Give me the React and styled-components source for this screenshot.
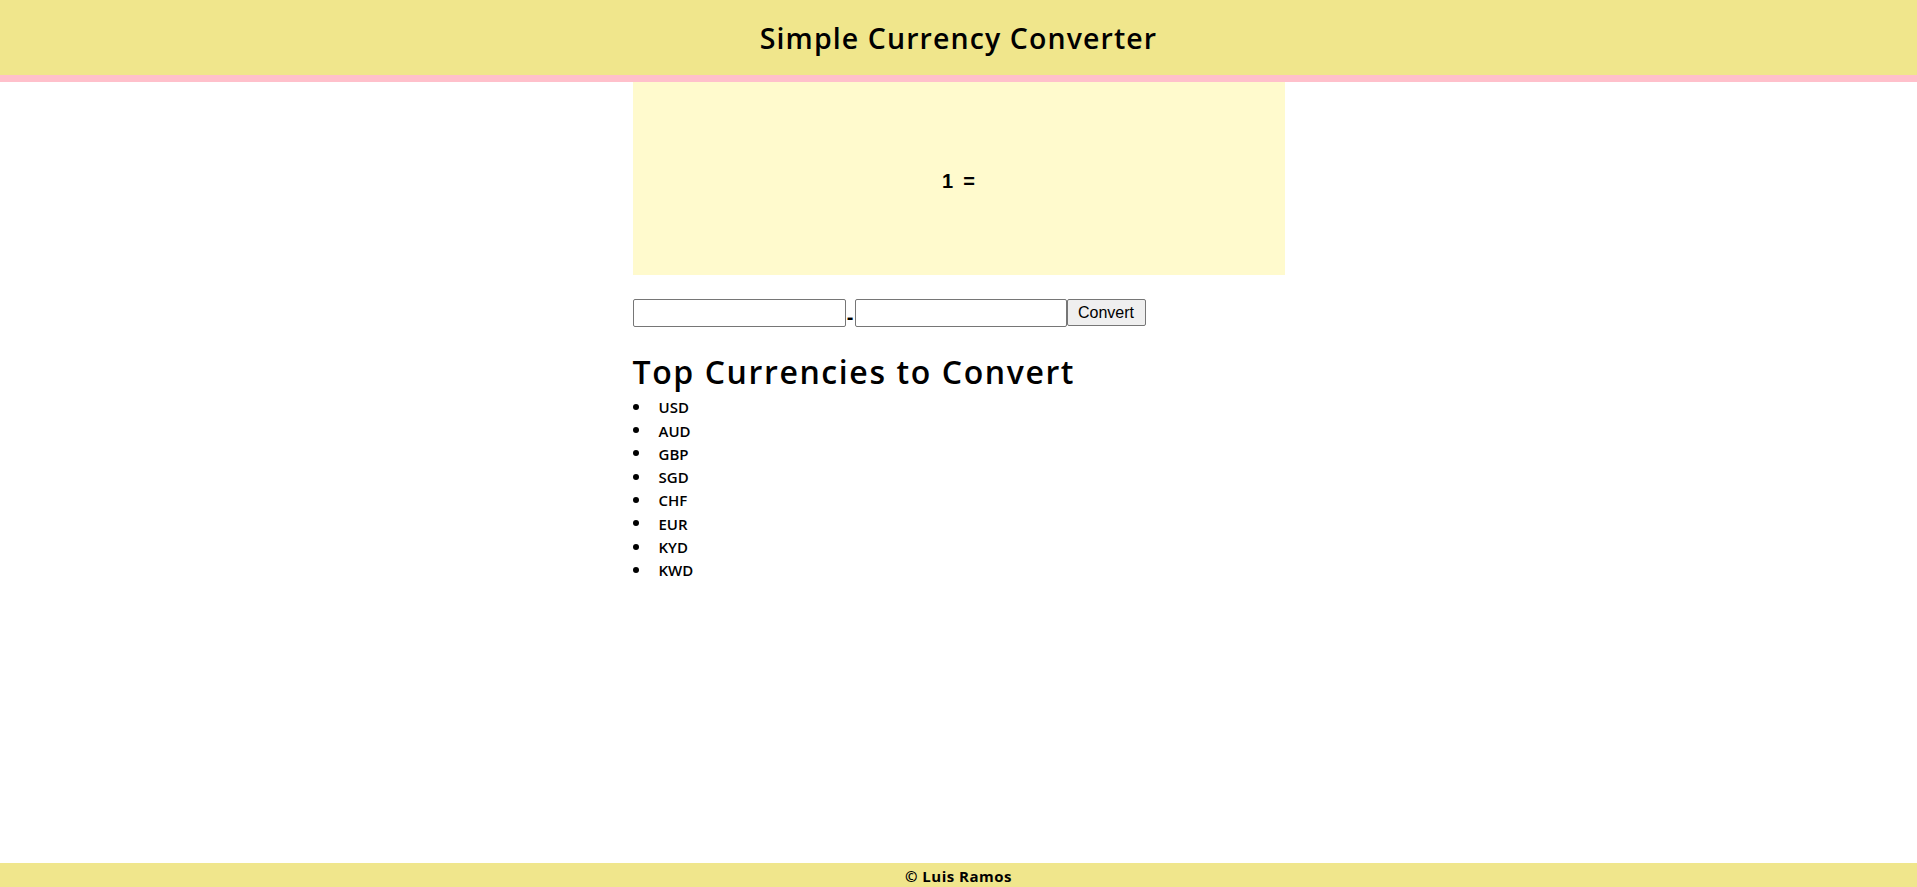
import React, { useState } from 'react';
import styled, { createGlobalStyle } from 'styled-components';

const GlobalStyle = createGlobalStyle`
  html, body {
    margin: 0;
    padding: 0;
    background: #fff;
  }
  body {
    font-family: "Open Sans", "Liberation Sans", sans-serif;
    color: #000;
  }
`;

const Page = styled.div`
  min-height: 100vh;
  display: flex;
  flex-direction: column;
`;

const Header = styled.header`
  height: 75px;
  background-color: #f0e68c;
  border-bottom: 7px solid #ffc0cb;
  display: flex;
  align-items: center;
  justify-content: center;
`;

const Title = styled.h1`
  margin: 0;
  font-family: "Open Sans", sans-serif;
  font-size: 28.5px;
  font-weight: 600;
  letter-spacing: 1.1px;
`;

const Main = styled.main`
  width: 652px;
  margin: 0 auto;
  flex: 1;
`;

const RatePanel = styled.div`
  height: 193px;
  background-color: #fffacd;
  display: flex;
  align-items: center;
  justify-content: center;
  padding-top: 6px;
  box-sizing: border-box;
`;

const RateText = styled.h3`
  margin: 0;
  display: flex;
  align-items: baseline;
  font-family: "Liberation Sans", Arial, sans-serif;
  font-size: 20px;
  font-weight: bold;
`;

const RateGap = styled.span`
  width: 10px;
`;

const ConvertRow = styled.form`
  margin-top: 24px;
  display: flex;
  align-items: flex-start;
`;

const CurrencyInput = styled.input`
  box-sizing: border-box;
  width: ${(p) => p.$w}px;
  height: 28px;
  padding: 1px 3px;
  border: 1px solid #767676;
  border-radius: 2px;
  font-family: "Liberation Sans", Arial, sans-serif;
  font-size: 16px;
  background: #fff;
`;

const Dash = styled.span`
  width: 9px;
  margin-top: 8px;
  text-align: center;
  font-family: "Liberation Sans", Arial, sans-serif;
  font-size: 20px;
  font-weight: bold;
  line-height: 20px;
`;

const ConvertButton = styled.button`
  box-sizing: border-box;
  width: 79px;
  height: 27px;
  padding: 0 6px;
  border: 1px solid #767676;
  border-radius: 2px;
  background-color: #efefef;
  font-family: "Liberation Sans", Arial, sans-serif;
  font-size: 16px;
  color: #000;
`;

const SectionTitle = styled.h2`
  margin: 23px 0 0;
  font-family: "Open Sans", sans-serif;
  font-size: 32px;
  font-weight: 600;
  letter-spacing: 1.6px;
  line-height: 43.6px;
`;

const CurrencyList = styled.ul`
  margin: 2px 0 0;
  padding: 0;
  list-style: none;
`;

const CurrencyItem = styled.li`
  display: flex;
  align-items: center;
  height: 23.3px;
  font-family: "Open Sans", sans-serif;
  font-size: 15px;
  font-weight: 600;

  &::before {
    content: '';
    width: 6px;
    height: 6px;
    border-radius: 50%;
    background: #000;
    margin-right: 20px;
    margin-top: -1px;
  }
`;

const Footer = styled.footer`
  height: 24px;
  background-color: #f0e68c;
  border-bottom: 5px solid #ffc0cb;
  text-align: center;
  font-family: "Open Sans", sans-serif;
  font-size: 15px;
  font-weight: bold;
  line-height: 26px;
  letter-spacing: 0.5px;
`;

const currencies = ['USD', 'AUD', 'GBP', 'SGD', 'CHF', 'EUR', 'KYD', 'KWD'];

export default function App() {
  const [from, setFrom] = useState('');
  const [to, setTo] = useState('');

  return (
    <Page>
      <GlobalStyle />
      <Header>
        <Title>Simple Currency Converter</Title>
      </Header>
      <Main>
        <RatePanel>
          <RateText>
            <span>1</span>
            <RateGap />
            <span>=</span>
          </RateText>
        </RatePanel>
        <ConvertRow onSubmit={(e) => e.preventDefault()}>
          <CurrencyInput $w={213} value={from} onChange={(e) => setFrom(e.target.value)} />
          <Dash>-</Dash>
          <CurrencyInput $w={212} value={to} onChange={(e) => setTo(e.target.value)} />
          <ConvertButton type="submit">Convert</ConvertButton>
        </ConvertRow>
        <SectionTitle>Top Currencies to Convert</SectionTitle>
        <CurrencyList>
          {currencies.map((c) => (
            <CurrencyItem key={c}>{c}</CurrencyItem>
          ))}
        </CurrencyList>
      </Main>
      <Footer>© Luis Ramos</Footer>
    </Page>
  );
}
